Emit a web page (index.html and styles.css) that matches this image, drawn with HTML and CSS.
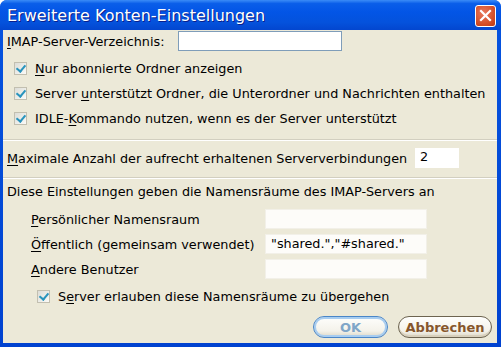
FILE: index.html
```html
<!DOCTYPE html>
<html lang="de">
  <head>
    <meta charset="UTF-8" />
    <title>Erweiterte Konten-Einstellungen</title>
    <link rel="stylesheet" href="styles.css">
  </head>
  <body>
    <div class="window">
      <div class="titlebar">
        <span class="title">Erweiterte Konten-Einstellungen</span>
        <span class="close">
          <svg width="13" height="13" viewBox="0 0 13 13">
            <path d="M2 2 L11 11 M11 2 L2 11" stroke="#fff" stroke-width="2.2" stroke-linecap="square" fill="none"/>
          </svg>
        </span>
      </div>

      <div class="content">
        <div class="row dir-row">
          <label class="dir-label"><u>I</u>MAP-Server-Verzeichnis:</label>
          <span class="field field-dir"></span>
        </div>

        <div class="check-list">
          <div class="check"><span class="box"></span><span><u>N</u>ur abonnierte Ordner anzeigen</span></div>
          <div class="check"><span class="box"></span><span>Server <u>u</u>nterstützt Ordner, die Unterordner und Nachrichten enthalten</span></div>
          <div class="check"><span class="box"></span><span>IDLE-<u>K</u>ommando nutzen, wenn es der Server unterstützt</span></div>
        </div>

        <div class="sep sep-top"></div>

        <div class="row max-row">
          <label class="max-label"><u>M</u>aximale Anzahl der aufrecht erhaltenen Serververbindungen</label>
          <span class="field field-max">2</span>
        </div>

        <div class="sep sep-bottom"></div>

        <div class="ns-intro">Diese Einstellungen geben die Namensräume des IMAP-Servers an</div>
        <div class="ns-grid">
          <label><u>P</u>ersönlicher Namensraum</label>
          <span class="field field-ns"></span>
          <label><u>Ö</u>ffentlich (gemeinsam verwendet)</label>
          <span class="field field-ns">"shared.","#shared."</span>
          <label><u>A</u>ndere Benutzer</label>
          <span class="field field-ns"></span>
        </div>
        <div class="check check-override"><span class="box"></span><span>S<u>e</u>rver erlauben diese Namensräume zu übergehen</span></div>

        <div class="buttons">
          <button class="btn btn-ok">OK</button>
          <button class="btn btn-cancel">Abbrechen</button>
        </div>
      </div>
    </div>
  </body>
</html>
```

FILE: styles.css
```css
:root {
  --face: #ece9d8;
  --text: #000;
}
body {
  margin: 0;
  width: 501px;
  height: 347px;
  overflow: hidden;
  font-family: "DejaVu Sans", sans-serif;
  font-size: 12.8px;
  color: var(--text);
}
.window {
  width: 501px;
  height: 347px;
  box-sizing: border-box;
  background: linear-gradient(#0654e0, #0042d0);
  border-radius: 7px 7px 0 0;
  padding: 0 4px 4px 3px;
  display: flex;
  flex-direction: column;
}
.titlebar {
  flex-shrink: 0;
  height: 30px;
  margin: 0 -4px 0 -3px;
  padding: 0 5px 0 7px;
  border-radius: 7px 7px 0 0;
  background: linear-gradient(#3b8cf7 0%, #0a5ee9 12%, #0355e6 40%, #0452dc 75%, #0346cf 100%);
  display: flex;
  align-items: center;
  justify-content: space-between;
}
.title {
  color: #fff;
  font-size: 16px;
  text-shadow: 1px 1px 0 #0a1e8a;
  padding-top: 1px;
}
.close {
  width: 19px;
  height: 20px;
  border: 1px solid #fff;
  border-radius: 3px;
  background: radial-gradient(circle at 40% 35%, #e97a5e, #d14a22 70%, #b93a15);
  display: flex;
  align-items: center;
  justify-content: center;
  margin-top: 1px;
}
.content {
  flex: 1;
  background: var(--face);
}
u {
  text-decoration: underline;
  text-underline-offset: 2px;
}
.field {
  display: block;
  box-sizing: border-box;
  background: #fff;
  height: 20px;
  line-height: 18px;
  padding: 0 5px;
}
.row {
  display: flex;
  align-items: center;
}
.dir-row {
  height: 20px;
  margin-top: 1px;
  padding-left: 4px;
  gap: 8px;
}
.dir-label {
  width: 163px;
}
.field-dir {
  width: 164px;
  border: 1px solid #7f9db9;
}
.check-list {
  margin-top: 5px;
  padding-left: 11px;
}
.check {
  display: flex;
  align-items: center;
  gap: 8px;
  height: 25px;
}
.box {
  flex-shrink: 0;
  width: 13px;
  height: 13px;
  box-sizing: border-box;
  border: 1px solid #c2bfb0;
  background: linear-gradient(135deg, #dcdcd6, #fbfbf8);
  position: relative;
}
.box::after {
  content: "";
  position: absolute;
  left: 3px;
  top: 0;
  width: 4px;
  height: 7px;
  border: solid #2994bd;
  border-width: 0 2px 2px 0;
  transform: rotate(40deg);
}
.sep {
  height: 0;
  border-top: 1px solid #d2cfc0;
  border-bottom: 1px solid #fff;
}
.sep-top {
  margin-top: 8px;
}
.max-row {
  margin-top: 7px;
  height: 20px;
  padding-left: 4px;
  gap: 8px;
}
.max-label {
  width: 400px;
  white-space: nowrap;
}
.field-max {
  width: 44px;
}
.sep-bottom {
  margin-top: 9px;
}
.ns-intro {
  margin-top: 3px;
  padding-left: 4px;
  height: 20px;
  line-height: 20px;
}
.ns-grid {
  display: grid;
  grid-template-columns: 234px 162px;
  row-gap: 5px;
  margin-top: 7px;
  padding-left: 28px;
  align-items: center;
}
.field-ns {
  height: 20px;
  border: 1px solid #f2f0e8;
  background: #fdfcf9;
}
.check-override {
  margin-top: 4px;
  height: 26px;
  padding-left: 34px;
}
.buttons {
  display: flex;
  justify-content: flex-end;
  gap: 10px;
  margin-top: 7px;
  padding-right: 5px;
}
.btn {
  font-family: "DejaVu Sans", sans-serif;
  font-size: 13px;
  font-weight: bold;
  height: 22px;
  border-radius: 11px;
  border: 1px solid #003c74;
  background: linear-gradient(#fefefc, #f4f2ea 70%, #dcd7c6);
  padding: 0;
}
.btn-ok {
  width: 75px;
  color: #80a6c8;
  border-color: #4a86c8;
  box-shadow: inset 0 0 0 2px #a8cdf0;
}
.btn-cancel {
  width: 94px;
  color: #86562c;
  border-color: #6d6450;
  box-shadow: inset 0 -2px 0 #d8d0bc;
}
```
